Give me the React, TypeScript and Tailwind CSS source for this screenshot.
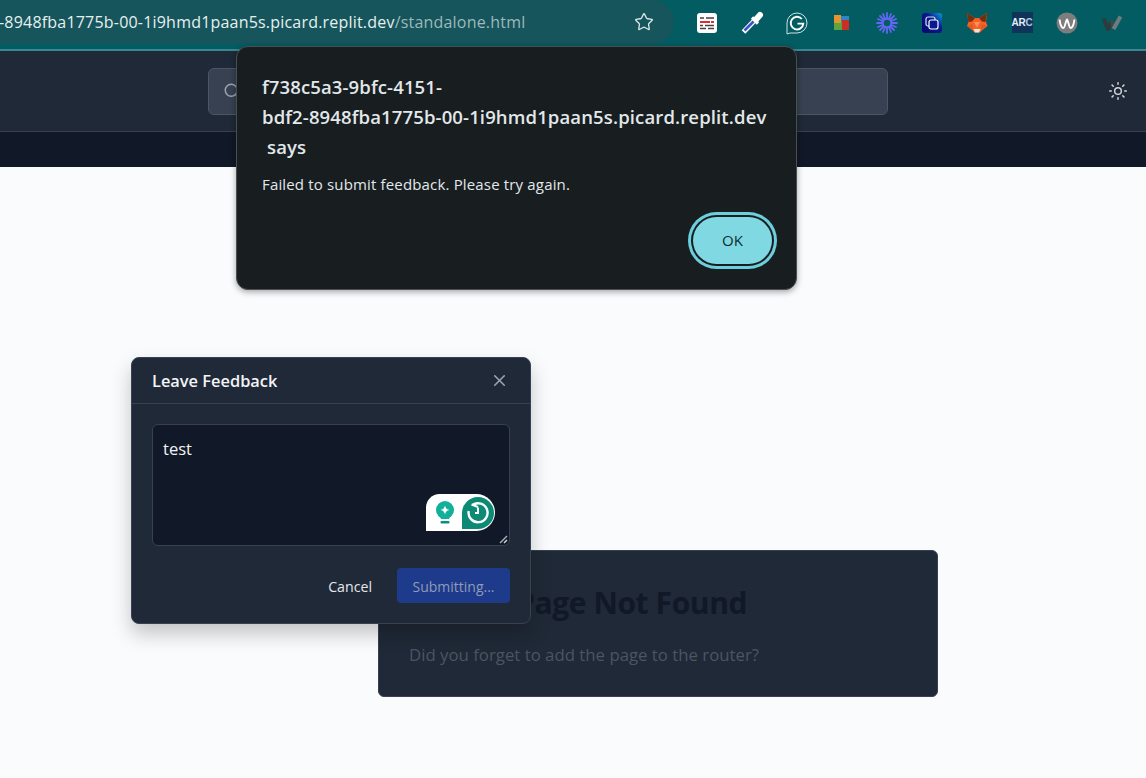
import { Search, Star, Sun, X } from "lucide-react";

const FONT = "font-['Open_Sans','Noto_Sans',sans-serif]";

function ExtSlot({ children }: { children: React.ReactNode }) {
  return <div className="flex h-[24px] w-[24px] items-center justify-center">{children}</div>;
}

function Extensions() {
  return (
    <div className="ml-[21px] flex items-center gap-[21px]">
      <ExtSlot>
        <svg width="22" height="22" viewBox="0 0 22 22">
          <rect x="1" y="1" width="20" height="20" rx="3" fill="#fff" />
          <path d="M4 6h4M10 6h8M4 13.500h3M9 13.500h9M4 16.500h6M12 16.500h6" stroke="#4a3f3f" strokeWidth="1.700" />
          <path d="M4 10h10M15 10h3" stroke="#e02b32" strokeWidth="2.200" />
        </svg>
      </ExtSlot>
      <ExtSlot>
        <svg width="24" height="24" viewBox="0 0 24 24" fill="none">
          <path d="M3.500 21 15 9" stroke="#fff" strokeWidth="5" />
          <path d="M4.500 19.500 14 10" stroke="#3f51c9" strokeWidth="2.600" />
          <path d="M12 6.500 18 12.500" stroke="#fff" strokeWidth="3.200" />
          <path d="M16 8.500 20 4" stroke="#fff" strokeWidth="6" strokeLinecap="round" />
        </svg>
      </ExtSlot>
      <ExtSlot>
        <svg width="24" height="24" viewBox="0 0 24 24" fill="none">
          <path d="M2 23V12A10 10 0 1 1 12 22H5Z" stroke="#c9e3e2" strokeWidth="1" />
          <path d="M16.800 8A6.300 6.300 0 1 0 18.300 12.600H12.500" stroke="#fff" strokeWidth="1.900" />
        </svg>
      </ExtSlot>
      <ExtSlot>
        <svg width="16" height="16" viewBox="0 0 16 16">
          <rect x="0" y="0" width="7" height="8" fill="#e8932c" />
          <rect x="7" y="1" width="8" height="7" fill="#2c87c9" />
          <rect x="0" y="8" width="8" height="7" fill="#5da53c" />
          <rect x="8" y="5" width="7" height="10" fill="#c92f22" />
        </svg>
      </ExtSlot>
      <ExtSlot>
        <svg width="22" height="22" viewBox="0 0 22 22" fill="none" stroke="#6466f5" strokeWidth="1.800" strokeLinecap="round">
          <path d="M11 1v20M1 11h20M4 4l14 14M18 4 4 18M7 2l8 18M15 2 7 20M2 7l18 8M20 7 2 15" />
          <circle cx="11" cy="11" r="4.200" fill="#035c62" stroke="#6466f5" strokeWidth="1.800" />
        </svg>
      </ExtSlot>
      <ExtSlot>
        <svg width="22" height="22" viewBox="0 0 22 22" fill="none">
          <defs>
            <linearGradient id="cp" x1="0" y1="1" x2="1" y2="0">
              <stop offset="0" stopColor="#06066e" />
              <stop offset="0.6" stopColor="#0a1a8c" />
              <stop offset="1" stopColor="#0aa0e0" />
            </linearGradient>
          </defs>
          <rect x="1" y="1" width="20" height="20" rx="3" fill="url(#cp)" />
          <rect x="5" y="5" width="9" height="9" rx="2" stroke="#d8e0f0" strokeWidth="1.200" />
          <rect x="8" y="8" width="9" height="9" rx="2" fill="#0a1a8c" stroke="#fff" strokeWidth="1.200" />
        </svg>
      </ExtSlot>
      <ExtSlot>
        <svg width="24" height="24" viewBox="0 0 24 24">
          <path d="M2 2l8 5h4l8-5-1 9 1.500 4-5 4-2.500 2.500H9.500L7 19l-5-4L3.500 11Z" fill="#f4622a" />
          <path d="M2 2l8 5-3 3.500-3.500.5ZM22 2l-8 5 3 3.500 3.500.5Z" fill="#70300f" />
          <path d="M8.500 18h7l-1.500 3.500h-4Z" fill="#f6e4d4" />
          <path d="M9 11h6l-3 5.500Z" fill="#fa9256" />
          <path d="M2.500 15l5-2 .5 6ZM21.500 15l-5-2-.5 6Z" fill="#e4571e" />
        </svg>
      </ExtSlot>
      <ExtSlot>
        <div className="flex h-[21px] w-[21px] items-center justify-center bg-[#0f3359] font-['Liberation_Sans',sans-serif] text-[10px] font-bold leading-none tracking-[-0.3px] text-[#e8eef5]">
          AR<span className="text-[#a8c8e0]">C</span>
        </div>
      </ExtSlot>
      <ExtSlot>
        <svg width="22" height="22" viewBox="0 0 22 22" fill="none">
          <circle cx="11" cy="11" r="10.500" fill="#7d7d7d" />
          <path d="M3.500 7.500C4.500 14 6 16 7.500 16S10 7.500 11 7.500 13 16 14.500 16 17.500 14 18.500 7.500" stroke="#fff" strokeWidth="1.900" />
        </svg>
      </ExtSlot>
      <ExtSlot>
        <svg width="22" height="16" viewBox="0 0 22 16" fill="none" strokeWidth="4">
          <path d="M2.500 3.500 7 14l4-8" stroke="#2f3a3c" />
          <path d="M10.500 5l2.500 9" stroke="#3c4a4c" />
          <path d="M12.500 14 19.500 1.500" stroke="#6b7d7e" />
        </svg>
      </ExtSlot>
    </div>
  );
}

function ChromeBar() {
  return (
    <div className="flex h-[51px] shrink-0 items-start border-b-2 border-[#3a888e] bg-[#035c62]">
      <div className="flex h-[44px] w-[674px] shrink-0 items-center justify-between overflow-hidden rounded-r-full bg-[#16555b] pr-[20px]">
        <div className="-ml-[1px] whitespace-nowrap font-['Open_Sans',sans-serif] text-[16px] tracking-[0.2px] text-[#e6f0f0]">
          -8948fba1775b-00-1i9hmd1paan5s.picard.replit.dev<span className="text-[#9db9bb]">/standalone.html</span>
        </div>
        <Star size={20} strokeWidth={1.6} className="text-[#dbe6e7]" />
      </div>
      <div className="flex h-[44px] items-center pt-[1px]">
        <Extensions />
      </div>
    </div>
  );
}

function AppHeader() {
  return (
    <div className="flex h-[81px] shrink-0 items-center border-b border-[#374151] bg-[#1f2937] pl-[208px] pr-[18px]">
      <div className="flex h-[47px] w-[680px] items-center rounded-md border border-[#4b5563] bg-[#374151] pl-[14px]">
        <Search size={18} className="text-[#9ca3af]" />
      </div>
      <Sun size={20} strokeWidth={1.8} className="ml-auto text-[#d1d5db]" />
    </div>
  );
}

function NotFoundCard() {
  return (
    <div className="h-[147px] w-[560px] rounded-md border border-[#374151] bg-[#1f2937] pl-[30px] pt-[30px]">
      <div className="flex items-center pl-[107px] text-[30px] font-bold leading-[44px] tracking-[-0.4px] text-[#111827]">Page Not Found</div>
      <p className="mt-[18px] text-[16.800px] leading-[24px] text-[#4b5563]">Did you forget to add the page to the router?</p>
    </div>
  );
}

function FeedbackDialog() {
  return (
    <div className="absolute left-[131px] top-[357px] h-[267px] w-[400px] rounded-lg border border-[#374151] bg-[#1f2937] shadow-[0_10px_20px_rgba(0,0,0,0.22)]">
      <div className="flex h-[46px] items-center justify-between border-b border-[#374151] pl-[20px] pr-[21px]">
        <h2 className="pt-[2px] text-[16.400px] font-semibold text-[#f3f4f6]">Leave Feedback</h2>
        <X size={19} className="text-[#9ca3af]" />
      </div>
      <div className="relative mx-[20px] mt-[20px]">
        <textarea
          defaultValue="test"
          className="block h-[122px] w-[358px] resize-none rounded-md border border-[#374151] bg-[#111827] px-[10px] py-[11px] text-[16.500px] leading-[26px] text-[#f3f4f6] outline-none"
        />
        <svg width="9" height="9" viewBox="0 0 9 9" fill="none" className="absolute left-[347px] top-[111px]">
          <path d="M1 8 8 1" stroke="#a8adb5" strokeWidth="1.500" />
          <path d="M5 8 8 5" stroke="#d8dade" strokeWidth="1.500" />
        </svg>
        <div className="absolute left-[274px] top-[70px] flex h-[37px] w-[69px] items-center rounded-r-[19px] rounded-tl-[14px] bg-white pl-[9px]">
          <svg width="20" height="24" viewBox="0 0 20 24">
            <circle cx="10" cy="9" r="9" fill="#12b09a" />
            <path d="M4 13h12l-2 5H6Z" fill="#12b09a" />
            <rect x="5.500" y="20" width="9" height="2.500" rx="1" fill="#0e8f7e" />
            <path d="M10 4.500c.8 3 1.500 3.700 4.500 4.500-3 .8-3.700 1.500-4.500 4.500-.8-3-1.500-3.700-4.500-4.500 3-.8 3.700-1.500 4.500-4.500Z" fill="#fff" />
          </svg>
          <svg width="32" height="32" viewBox="0 0 32 32" fill="none" className="ml-[7px]">
            <path d="M0 32V16A16 16 0 1 1 16 32Z" fill="#0c8a76" />
            <path d="M10.500 8A9.500 9.500 0 1 1 6.700 14" stroke="#fff" strokeWidth="2.400" />
            <path d="M9.500 7.500 16 10M16 10.500V16h-3" stroke="#fff" strokeWidth="2" />
          </svg>
        </div>
      </div>
      <div className="mr-[20px] mt-[22px] flex items-center justify-end gap-[25px]">
        <button className="translate-y-[1px] text-[14.200px] text-[#e5e7eb]">Cancel</button>
        <button className="h-[35px] w-[113px] rounded bg-[#1e3a8a] pt-[2px] text-[14px] text-[#8f9bb8]">Submitting...</button>
      </div>
    </div>
  );
}

function BrowserAlert() {
  return (
    <div className="absolute left-[236px] top-[46px] h-[244px] w-[561px] rounded-xl border border-[#4a4f52] bg-[#181d20] pl-[25px] pt-[25px] shadow-[0_2px_6px_rgba(0,0,0,0.35)]">
      <div className="text-[18.500px] font-semibold leading-[30px] tracking-[0.13px] text-[#e2e8ea]">
        <div>f738c5a3-9bfc-4151-</div>
        <div>bdf2-8948fba1775b-00-1i9hmd1paan5s.picard.replit.dev</div>
        <div className="pl-[5px]">says</div>
      </div>
      <p className="mt-[12px] text-[15px] leading-[20px] tracking-[0.16px] text-[#e2e8ea]">Failed to submit feedback. Please try again.</p>
      <div className="mr-[24px] mt-[23px] flex justify-end">
        <button className="h-[47px] w-[79px] rounded-full bg-[#80d8e3] text-[15px] font-medium text-[#0b2e36] shadow-[0_0_0_2px_#181d20,0_0_0_5px_#6ccfdc]">OK</button>
      </div>
    </div>
  );
}

export default function App() {
  return (
    <div className={`relative flex h-[778px] w-[1146px] flex-col overflow-hidden bg-[#fafbfd] ${FONT}`}>
      <ChromeBar />
      <AppHeader />
      <div className="h-[35px] shrink-0 bg-[#111827]" />
      <main className="flex-1 pl-[378px] pt-[383px]">
        <NotFoundCard />
      </main>
      <FeedbackDialog />
      <BrowserAlert />
    </div>
  );
}
